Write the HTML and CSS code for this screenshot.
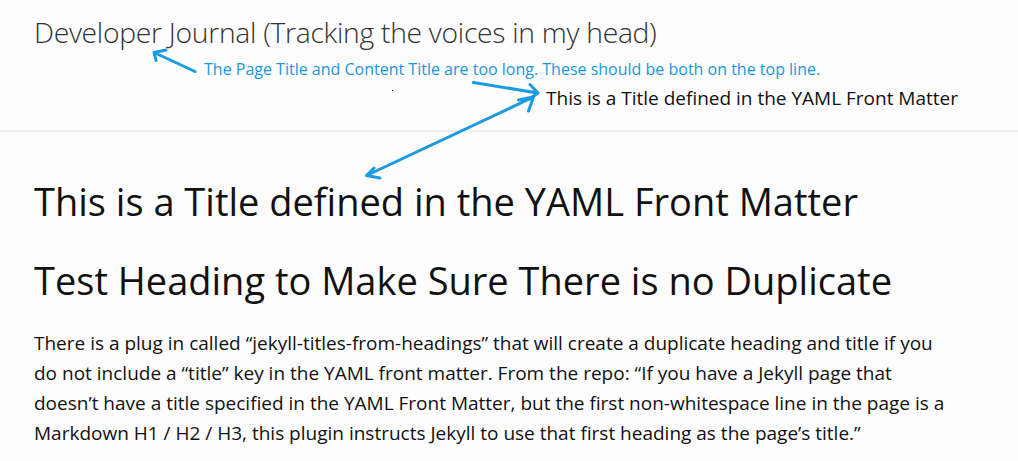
FILE: index.html
```html
<!DOCTYPE html>
<html lang="en">
<head>
<meta charset="utf-8">
<title>Developer Journal</title>
<link rel="stylesheet" href="styles.css">
</head>
<body>
<header class="site-header">
  <a class="site-title" href="#">Developer Journal (Tracking the voices in my head)</a>
  <span class="page-title">This is a Title defined in the YAML Front Matter</span>
</header>
<main class="content">
  <h1 class="post-title">This is a Title defined in the YAML Front Matter</h1>
  <h2 class="post-heading">Test Heading to Make Sure There is no Duplicate</h2>
  <p class="post-text">There is a plug in called “jekyll-titles-from-headings” that will create a duplicate heading and title if you do not include a “title” key in the YAML front matter. From the repo: “If you have a Jekyll page that doesn’t have a title specified in the YAML Front Matter, but the first non-whitespace line in the page is a Markdown H1 / H2 / H3, this plugin instructs Jekyll to use that first heading as the page’s title.”</p>
</main>
<div class="annotation">
  <p class="note">The Page Title and Content Title are too long. These should be both on the top line.</p>
  <svg class="arrows" width="1018" height="461" viewBox="0 0 1018 461">
    <g fill="none" stroke="#1a9ae0" stroke-width="3" stroke-linecap="round" stroke-linejoin="round">
      <path d="M195 71.5 L154 52.5 M154 52.5 L166 50 M154 52.5 L156 60.5"/>
      <path d="M473.5 82.5 L538 93 M538 93 L530 84.5 M538 93 L529.5 99"/>
      <path d="M533.5 97 L366.5 175.5 M533.5 97 L518.5 100 M533.5 97 L528.5 111 M366.5 175.5 L374 168 M366.5 175.5 L380 178"/>
    </g>
    <rect x="392" y="90" width="1" height="1" fill="#222"/>
  </svg>
</div>
</body>
</html>
```
FILE: styles.css
```css
html, body {
  margin: 0;
  padding: 0;
  background: #fdfdfd;
}

body {
  font-family: "Open Sans", "Noto Sans", sans-serif;
  color: #111;
  position: relative;
  width: 1018px;
  height: 461px;
  overflow: hidden;
}

.site-header {
  display: flex;
  flex-direction: column;
  align-items: flex-start;
  padding: 12px 60px 20px 34px;
  border-bottom: 2px solid #eeeeee;
}

.site-title {
  font-size: 28.3px;
  font-weight: 300;
  line-height: 40px;
  color: #333;
  text-decoration: none;
  letter-spacing: -0.3px;
}

.page-title {
  align-self: flex-end;
  margin-top: 34px;
  font-size: 19px;
  line-height: 24px;
  color: #111;
}

.content {
  padding: 45px 34px 0 34px;
}

.post-title,
.post-heading {
  margin: 0;
  font-size: 38px;
  font-weight: 400;
  line-height: 48px;
  color: #111;
}

.post-heading {
  margin-top: 30.5px;
}

.post-text {
  margin: 24px 0 0 0;
  width: 920px;
  font-size: 19px;
  line-height: 30px;
  color: #111;
}

.annotation {
  position: absolute;
  left: 0;
  top: 0;
  width: 1018px;
  height: 461px;
  pointer-events: none;
}

.note {
  position: absolute;
  left: 204px;
  top: 59px;
  margin: 0;
  font-size: 16px;
  line-height: 20px;
  color: #1b96dc;
}

.arrows {
  position: absolute;
  left: 0;
  top: 0;
}
```
